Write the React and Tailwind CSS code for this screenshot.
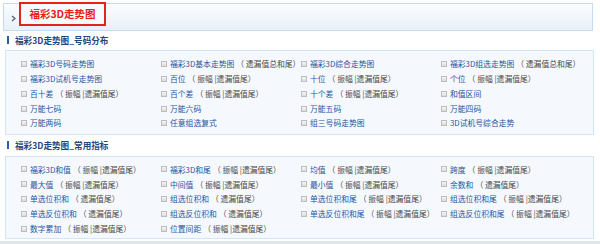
const GAP = "（ 振幅 |遗漏值尾）";
const YL = "（ 遗漏值尾）";
const ZH = "（ 遗漏值总和尾）";

const distribution = [
  [["福彩3D号码走势图"], ["福彩3D基本走势图", ZH], ["福彩3D综合走势图"], ["福彩3D组选走势图", ZH]],
  [["福彩3D试机号走势图"], ["百位", GAP], ["十位", GAP], ["个位", GAP]],
  [["百十差", GAP], ["百个差", GAP], ["十个差", GAP], ["和值区间"]],
  [["万能七码"], ["万能六码"], ["万能五码"], ["万能四码"]],
  [["万能两码"], ["任意组选复式"], ["组三号码走势图"], ["3D试机号综合走势"]],
];

const indicators = [
  [["福彩3D和值", GAP], ["福彩3D和尾", GAP], ["均值", GAP], ["跨度", GAP]],
  [["最大值", GAP], ["中间值", GAP], ["最小值", GAP], ["余数和", YL]],
  [["单选位积和", YL], ["组选位积和", YL], ["单选位积和尾", GAP], ["组选位积和尾", GAP]],
  [["单选反位积和", YL], ["组选反位积和", YL], ["单选反位积和尾", GAP], ["组选反位积和尾", GAP]],
  [["数字累加", GAP], ["位置间距", GAP]],
];

function Item({ label, note }) {
  return (
    <div className="flex items-center whitespace-pre">
      <span className="w-[6px] h-[6px] mr-[3px] border border-[#bdbdbd] bg-gradient-to-b from-[#f6f6f6] to-[#dcdcdc]" />
      <span className="text-[#1d55a2]">{label}</span>
      {note && <span className="ml-[2px] text-[#4a4a4a]">{note}</span>}
    </div>
  );
}

function SectionTitle({ children }) {
  return (
    <div className="h-[12px] flex items-center pl-[7px]">
      <span className="w-[2px] h-[8px] bg-[#2b5ea7]" />
      <span className="ml-[6px] text-[8.6px] font-bold text-[#1f477f]">{children}</span>
    </div>
  );
}

function Panel({ rows, rowH, className }) {
  return (
    <div className={`ml-[5px] w-[589px] border border-[#d3e4f3] bg-[#f5f9fd] pl-[15px] ${className}`}>
      {rows.map((row, i) => (
        <div key={i} className="grid grid-cols-[repeat(4,140px)] items-center" style={{ height: rowH }}>
          {row.map(([label, note], j) => (
            <Item key={j} label={label} note={note} />
          ))}
        </div>
      ))}
    </div>
  );
}

export default function App() {
  return (
    <div
      className="w-[600px] h-[244px] bg-white overflow-hidden text-[7.8px] leading-none"
      style={{ fontFamily: '"Noto Sans CJK SC", "Noto Sans", sans-serif' }}
    >
      {/* top bar */}
      <div className="mx-[3px] mt-[3px] w-[590px] h-[28px] border border-[#c6dbee] bg-gradient-to-b from-[#fbfdff] to-[#e8f0f8] flex items-start">
        <svg className="ml-[7px] mt-[11px]" width="5" height="7" viewBox="0 0 5 7">
          <path d="M1 1 L4 3.5 L1 6" fill="none" stroke="#5a6470" strokeWidth="1.4" />
        </svg>
        <div className="ml-[3px] -mt-[2px] h-[24px] w-[87px] border-2 border-[#e1241c] bg-[#f7fafd] flex items-center justify-center">
          <span className="text-[10.5px] font-bold text-[#e8221a]">福彩3D走势图</span>
        </div>
      </div>

      <div className="mt-[3px]">
        <SectionTitle>福彩3D走势图_号码分布</SectionTitle>
      </div>
      <Panel rows={distribution} rowH={14.75} className="mt-[4px] h-[85px] pt-[6px]" />

      <div className="mt-[4px]">
        <SectionTitle>福彩3D走势图_常用指标</SectionTitle>
      </div>
      <Panel rows={indicators} rowH={14.95} className="mt-[5px] h-[83px] pt-[5px]" />

      <div className="mt-[2px] h-[3px] bg-[#dfe5eb]" />
    </div>
  );
}
